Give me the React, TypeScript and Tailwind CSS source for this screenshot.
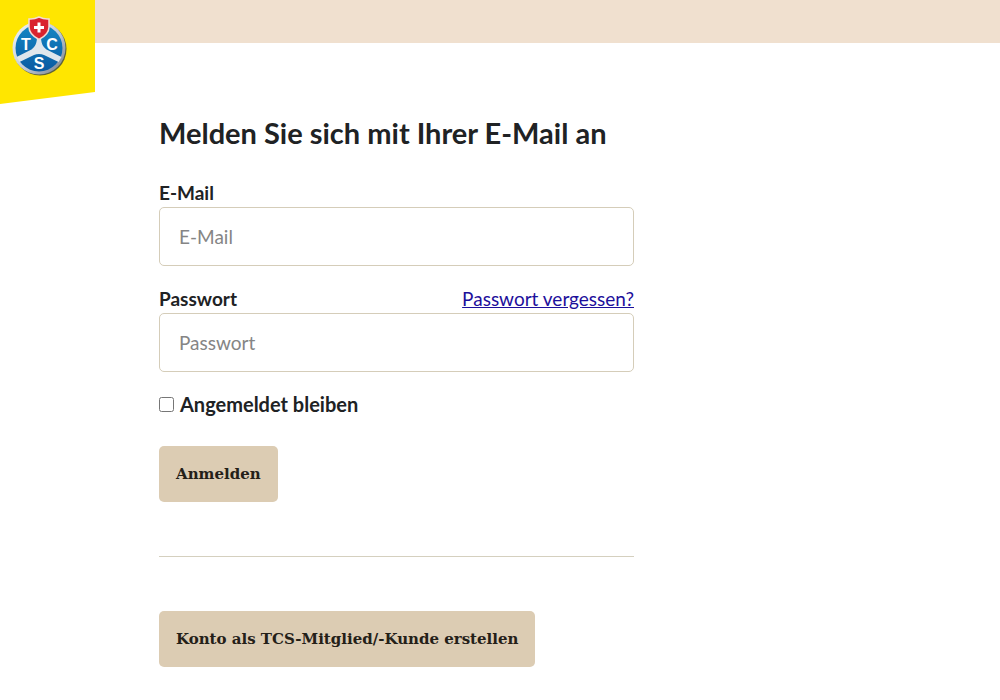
import { ComponentProps, useState } from 'react'

function Logo() {
  return (
    <svg viewBox="0 0 96 104" className="block w-24 h-[104px]" role="img" aria-label="TCS">
      <defs>
        <linearGradient id="rim" x1="0" y1="0" x2="1" y2="1">
          <stop offset="0" stopColor="#f4f6f8" />
          <stop offset="0.55" stopColor="#c3ccd6" />
          <stop offset="1" stopColor="#6d7787" />
        </linearGradient>
        <linearGradient id="disc" x1="0" y1="0" x2="0" y2="1">
          <stop offset="0" stopColor="#1487c4" />
          <stop offset="1" stopColor="#0a5aa2" />
        </linearGradient>
      </defs>
      <path d="M0 0H95V92L0 104Z" fill="#ffe600" />
      <circle cx="40" cy="49" r="26.5" fill="#5d6238" />
      <circle cx="39" cy="48" r="26.5" fill="url(#rim)" />
      <circle cx="39" cy="48" r="23.5" fill="url(#disc)" />
      <path
        d="M37 36H41C41 43 42.5 46.5 46.5 49.5L61.5 57L58.5 62L44 55C41 53.5 37 53.5 34 55L19.5 62L16.5 57L31.5 49.5C35.5 46.5 37 43 37 36Z"
        fill="#dfe6ec"
      />
      <g fill="#fff" fontFamily="'Liberation Sans', sans-serif" fontWeight="700" textAnchor="middle">
        <text x="26" y="50" fontSize="16">T</text>
        <text x="52" y="50" fontSize="16">C</text>
        <text x="39" y="69" fontSize="16">S</text>
      </g>
      <path
        d="M29 19Q34 19.5 39 17Q44 19.5 49 19V27C49 33 45 36.5 39 39.5C33 36.5 29 33 29 27Z"
        fill="#d9232e"
        stroke="#f3ddd6"
        strokeWidth="1.5"
      />
      <path d="M37.5 22.5H40.5V26H44V29H40.5V32.5H37.5V29H34V26H37.5Z" fill="#fff" />
    </svg>
  )
}

function TextInput(props: ComponentProps<'input'>) {
  return (
    <input
      {...props}
      className="block w-full h-[59px] px-[19px] text-[19px] bg-white border border-[#d5cdb9] rounded-[5px] placeholder:text-[#858585]"
    />
  )
}

function Button(props: ComponentProps<'button'>) {
  return (
    <button
      {...props}
      className="block h-14 px-[17px] rounded-[5px] bg-[#dcccb3] text-[#242018] text-[15px] font-bold font-['DejaVu_Serif',serif] whitespace-nowrap cursor-pointer"
    />
  )
}

export default function App() {
  const [remember, setRemember] = useState(false)

  return (
    <div className="relative min-h-screen bg-white text-[#202224] font-['Lato',sans-serif]">
      <header className="h-[43px] bg-[#f0e0cf]">
        <a href="#" className="absolute top-0 left-0">
          <Logo />
        </a>
      </header>

      <main className="ml-[159px] mr-6 max-w-[475px] pt-[72px] pb-8">
        <h1 className="text-[29px] leading-9 font-bold whitespace-nowrap">
          Melden Sie sich mit Ihrer E-Mail an
        </h1>

        <form className="mt-7" onSubmit={(e) => e.preventDefault()}>
          <label htmlFor="email" className="block text-[19px] leading-7 font-bold">
            E-Mail
          </label>
          <TextInput id="email" type="email" placeholder="E-Mail" />

          <div className="mt-[19px] flex items-center justify-between text-[19px] leading-7">
            <label htmlFor="password" className="font-bold">
              Passwort
            </label>
            <a href="#" className="text-[#1d0f9b] underline">
              Passwort vergessen?
            </a>
          </div>
          <TextInput id="password" type="password" placeholder="Passwort" />

          <div className="mt-[18px] mb-7 flex items-center gap-[6px]">
            <input
              id="remember"
              type="checkbox"
              checked={remember}
              onChange={(e) => setRemember(e.target.checked)}
              className="size-[15px]"
            />
            <label htmlFor="remember" className="text-xl leading-7 font-bold">
              Angemeldet bleiben
            </label>
          </div>

          <Button type="submit">Anmelden</Button>
        </form>

        <hr className="my-[54px] border-[#d5d0bf]" />

        <Button type="button">Konto als TCS-Mitglied/-Kunde erstellen</Button>
      </main>
    </div>
  )
}
